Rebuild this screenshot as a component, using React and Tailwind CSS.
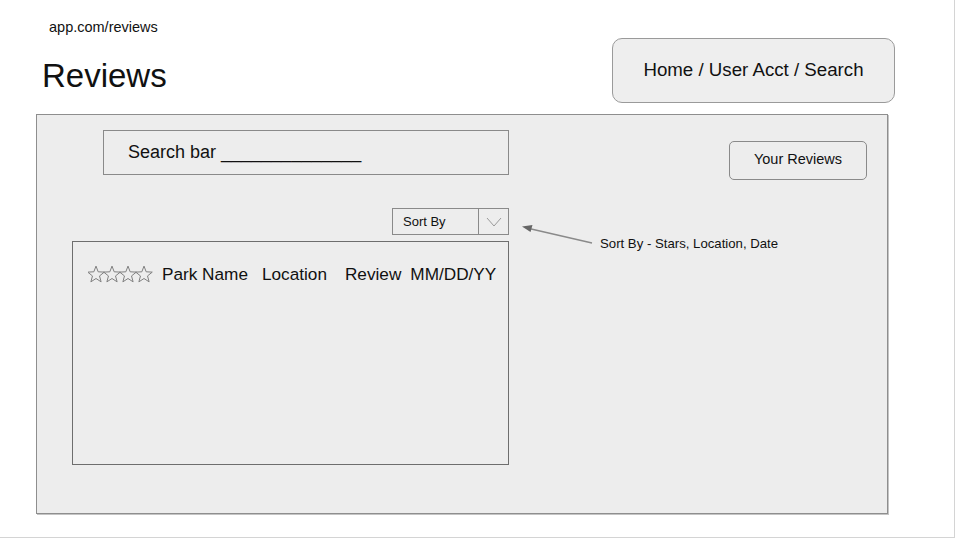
import React from "react";

function Star({ x }) {
  const cx = x + 8;
  const pts = [];
  for (let i = 0; i < 10; i++) {
    const r = i % 2 === 0 ? 8.7 : 3.7;
    const a = (Math.PI / 5) * i - Math.PI / 2;
    pts.push(`${(cx + r * Math.cos(a)).toFixed(2)},${(9.8 + r * Math.sin(a)).toFixed(2)}`);
  }
  return <polygon points={pts.join(" ")} fill="none" stroke="#808080" strokeWidth="1" strokeLinejoin="miter" />;
}

export default function App() {
  return (
    <div
      className="w-[955px] h-[538px] bg-white border-r border-b border-[#d4d4d4] text-[#111]"
      style={{ fontFamily: '"Liberation Sans", Arial, sans-serif' }}
    >
      <div className="flex justify-between h-[114px]">
        <div className="pl-[42px] pt-[19px]">
          <div className="ml-[7px] text-[14.5px] leading-[17px]">app.com/reviews</div>
          <div className="mt-[21px] text-[33px] leading-[38px]">Reviews</div>
        </div>
        <div className="mt-[38px] mr-[59px] w-[283px] h-[65px] rounded-[10px] border border-[#9a9a9a] bg-[#eeeeee] flex items-center justify-center text-[18.7px] pb-[1px]">
          Home / User Acct / Search
        </div>
      </div>

      <div className="ml-[36px] w-[852px] h-[400px] bg-[#ededed] border border-[#8e8e8e] shadow-[1px_1px_0_#c4c4c4] flex flex-col">
        <div className="flex items-start">
          <div className="ml-[66px] mt-[15px] w-[406px] h-[45px] border border-[#8a8a8a] flex items-center pl-[24px] text-[18px]">
            Search bar ______________
          </div>
          <div className="ml-auto mr-[20px] mt-[26px] w-[138px] h-[39px] rounded-[5px] border border-[#8a8a8a] flex items-center justify-center text-[14.5px] pb-[2px]">
            Your Reviews
          </div>
        </div>

        <div className="flex items-start h-[27px] mt-[28px]">
          <div className="ml-[355px] w-[117px] h-[27px] border border-[#8a8a8a] flex text-[13px]">
            <div className="w-[86px] h-full border-r border-[#8a8a8a] flex items-center pl-[10px]">Sort By</div>
            <div className="flex-1 flex items-center justify-center">
              <svg width="16" height="10" viewBox="0 0 16 10">
                <polyline points="1,1 8,9 15,1" fill="none" stroke="#9a9a9a" strokeWidth="1" />
              </svg>
            </div>
          </div>
          <svg width="91" height="42" viewBox="0 0 91 42" className="shrink-0 overflow-visible">
            <line x1="20" y1="20.5" x2="83" y2="35" stroke="#8a8a8a" strokeWidth="1.3" />
            <polygon points="13,18.5 23.5,17 21.5,24" fill="#666" />
          </svg>
          <div className="mt-[28px] text-[13.2px] leading-[16px] whitespace-nowrap">Sort By - Stars, Location, Date</div>
        </div>

        <div className="ml-[35px] mt-[6px] w-[437px] h-[224px] border border-[#6e6e6e]">
          <div className="flex items-center pl-[15px] pt-[23px] text-[17.2px] leading-[19px] whitespace-nowrap">
            <svg width="66" height="19" viewBox="0 0 66 19" className="shrink-0">
              <Star x={0} />
              <Star x={16} />
              <Star x={32} />
              <Star x={48} />
            </svg>
            <span className="ml-[8px]">Park Name</span>
            <span className="ml-[14px]">Location</span>
            <span className="ml-[18px]">Review</span>
            <span className="ml-[9px]">MM/DD/YY</span>
          </div>
        </div>
      </div>
    </div>
  );
}
